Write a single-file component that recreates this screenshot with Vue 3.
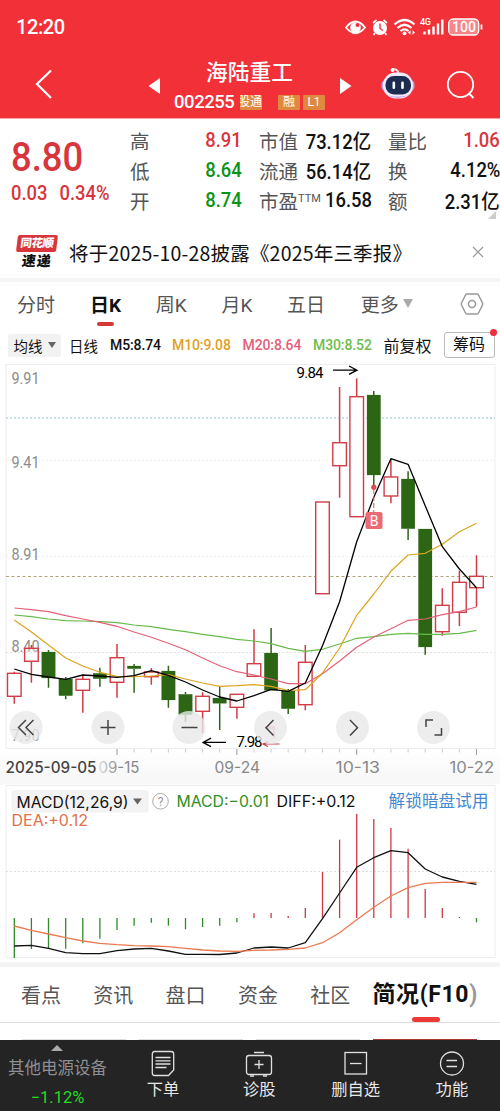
<script setup>
import { ref } from 'vue'

const quotes = ref([
  [
    { label: '高', value: '8.91', color: 'red' },
    { label: '市值', value: '73.12亿' },
    { label: '量比', value: '1.06', color: 'red' },
  ],
  [
    { label: '低', value: '8.64', color: 'green' },
    { label: '流通', value: '56.14亿' },
    { label: '换', value: '4.12%' },
  ],
  [
    { label: '开', value: '8.74', color: 'green' },
    { label: '市盈', sup: 'TTM', value: '16.58' },
    { label: '额', value: '2.31亿' },
  ],
])

const periods = ['分时', '日K', '周K', '月K', '五日']
const activePeriod = ref('日K')

const sections = ['看点', '资讯', '盘口', '资金', '社区']

// x of the n-th trading day
const px = (i) => +(14.3 + i * 17.12).toFixed(1)

// [high, body top, body bottom, low, up]
const candles = [
  [671.7, 673.3, 696.3, 703.7, 1],
  [645, 648.3, 661.3, 682.7, 1],
  [650, 652, 678, 687.7, 0],
  [677, 679, 695.7, 699.3, 0],
  [675.7, 679.3, 690.3, 712.7, 1],
  [667.7, 673.3, 678.7, 686.7, 0],
  [644, 657.7, 682.3, 697.7, 1],
  [664, 666, 668.7, 692.7, 0],
  [668, 672, 676.7, 684.7, 1],
  [665.7, 671, 700, 707.7, 0],
  [692, 694.3, 714.7, 722, 0],
  [692.3, 696.3, 711.3, 733, 1],
  [686.7, 698, 703.3, 730, 0],
  [694.3, 694.3, 707.3, 718.7, 1],
  [629.3, 663.7, 676.3, 676.3, 1],
  [628, 653, 690.3, 690.3, 0],
  [689, 691, 708.7, 714, 0],
  [645, 662.3, 704.7, 710.3, 1],
  [502, 502, 593.7, 593.7, 1],
  [387, 442.7, 465.7, 497.7, 1],
  [378.3, 396.7, 516.7, 516.7, 1],
  [391, 395, 475, 486.7, 0],
  [459, 477, 496, 503.3, 1],
  [471.3, 479, 528.7, 540, 0],
  [529, 529, 647, 654.7, 0],
  [588.3, 605.3, 631.7, 635.7, 1],
  [570.7, 582.3, 612.3, 626, 1],
  [555.3, 576.3, 587.7, 606.7, 1],
]

const ma5 = [669, 674.3, 677, 679.3, 675, 676, 677.3, 675.7, 670.7, 675.3, 682, 690, 697, 701, 695.7, 689.3, 691.3, 683, 645.7, 601.7, 541.7, 497.3, 458.7, 464.3, 505.7, 546.7, 569, 587.7]
const ma10 = [620, 632, 645, 658, 666, 672.3, 676.3, 676.7, 676, 674.7, 679, 683, 686.3, 685.7, 684.7, 686.3, 690.7, 689.7, 673, 648, 615.3, 594, 571.3, 555, 553.3, 544.3, 531.7, 523.3]
const ma20 = [608, 609.7, 611.7, 615.7, 619, 622.3, 626.3, 632, 637.3, 643.3, 649.7, 658, 665.7, 671.7, 675, 679, 683.7, 683.7, 673.7, 661, 647.3, 637, 628.7, 620.3, 619, 614.7, 611.7, 607]
const ma30 = [615, 616.7, 619, 620.7, 621, 621.7, 622.7, 625, 626.7, 629.3, 631.7, 634.3, 636.7, 639.3, 641, 643.7, 648.3, 651.3, 649.3, 644, 638.3, 636.7, 634.3, 633.3, 634.3, 634.3, 633.3, 630.3]

const bars = [958, 949, 948.3, 948.7, 943.3, 938.7, 930, 925.7, 922.7, 925.7, 929.3, 927, 925.7, 922.3, 913.3, 913, 916, 908, 872, 839.7, 814, 819, 828, 848.7, 889, 908, 917, 922.3]
const diff = [946, 945.3, 948.3, 952.7, 953.7, 953.7, 950.7, 949, 948.3, 951, 954.3, 954.3, 954.5, 953, 948, 947, 948, 942.7, 918.7, 893, 867.3, 857.7, 850.7, 852.7, 869, 877, 881.3, 884.3]
const dea = [926, 930.3, 934, 937.7, 941, 943.3, 944.7, 945.7, 946, 946.7, 948.3, 950, 951, 951.3, 950.3, 950, 949.3, 948, 942.7, 932.7, 919.7, 907.3, 896, 887.7, 883.3, 882.3, 882.3, 882.3]

const line = (arr) => arr.map((y, i) => `${px(i)},${y}`).join(' ')

const priceLabels = [
  { text: '9.91', y: 384 },
  { text: '9.41', y: 468 },
  { text: '8.91', y: 560 },
  { text: '8.40', y: 652 },
  { text: '7.90', y: 741 },
]
const ticks = Array.from({ length: 22 }, (_, i) => i + 6)
const buttonX = [26, 108, 189, 270.5, 352.5, 433.5]
</script>

<template>
  <div class="page">
    <header class="header">
      <div class="status">
        <span class="time">12:20</span>
        <svg class="status-icons" width="142" height="24" viewBox="0 0 142 24">
          <!-- eye -->
          <path d="M1 12.5 Q10.500 0.500 20 12.500 Q10.500 24 1 12.500Z" fill="none" stroke="#fff" stroke-width="1.8" />
          <circle cx="10.500" cy="12.500" r="5.300" fill="#fff" />
          <circle cx="12.500" cy="10" r="2" fill="#f23038" />
          <!-- alarm -->
          <circle cx="35" cy="13" r="7" fill="#fff" />
          <path d="M28 8 L31.500 5 M42 8 L38.500 5 M30 18 L28.500 20 M40 18 L41.500 20" stroke="#fff" stroke-width="1.700" />
          <path d="M35 8.500 V13.500 L38 15.500" fill="none" stroke="#f23038" stroke-width="1.400" />
          <!-- wifi -->
          <g fill="none" stroke="#fff" stroke-width="2.200">
            <path d="M49.500 9.500 Q59.500 0.500 69.500 9.500" />
            <path d="M52.500 13 Q59.500 6.500 66.500 13" />
            <path d="M55.500 16.200 Q59.500 12.700 63.500 16.200" />
          </g>
          <circle cx="59.500" cy="18.300" r="1.900" fill="#fff" />
          <path d="M65.500 15.200 L63 17.500 L65.500 19.800Z M67.500 15.200 L70 17.500 L67.500 19.800Z" fill="#fff" />
          <!-- signal -->
          <text x="75" y="10" class="net" textLength="11">4G</text>
          <path d="M79.500 19.500 V16.500 M84 19.500 V14.500 M88.500 19.500 V11.500 M93 19.500 V8.500 M97.300 19.500 V4.500" stroke="#fff" stroke-width="2.400" />
          <!-- battery -->
          <rect x="103.700" y="4" width="30" height="16" rx="4.500" fill="#f7868b" stroke="#fff" stroke-width="1.300" />
          <path d="M136.500 9.500 V14.500" stroke="#fff" stroke-width="1.800" />
          <text x="107" y="17.200" class="battery" textLength="24">100</text>
        </svg>
      </div>
      <div class="title-row">
        <svg class="back" width="20" height="32" viewBox="0 0 20 32"><path d="M17 2.500 L3 16 L17 30" fill="none" stroke="#fff" stroke-width="2.200" /></svg>
        <svg class="prev" width="12" height="18" viewBox="0 0 12 18"><path d="M0.500 9 L12 1 V17Z" fill="#fff" /></svg>
        <div class="stock">
          <div class="name">海陆重工</div>
          <div class="code-row">
            <span class="code">002255</span>
            <span class="tag clipped"><i>股通</i></span>
            <span class="tag margin">融</span>
            <span class="tag">L1</span>
          </div>
        </div>
        <svg class="next" width="12" height="18" viewBox="0 0 12 18"><path d="M11.500 9 L0 1 V17Z" fill="#fff" /></svg>
        <svg class="robot" width="36" height="34" viewBox="0 0 36 34">
          <path d="M12 2.500 Q17 1 18.500 6" fill="none" stroke="#ffdfe8" stroke-width="2" />
          <circle cx="12.500" cy="3" r="1.900" fill="#fff" />
          <rect x="1.500" y="12.500" width="33" height="12" rx="5" fill="#b5a5f2" />
          <rect x="3" y="5.500" width="30" height="26" rx="12.500" fill="#f2eafe" />
          <path d="M7 28 Q18 34 29 28 Q18 31 7 28" fill="#c7b0f2" />
          <rect x="5.500" y="9" width="25.500" height="18.500" rx="8.500" fill="#1c2b50" />
          <path d="M13.800 15.800 V20.800 M22.500 15.800 V20.800" stroke="#fff" stroke-width="2.600" stroke-linecap="round" />
        </svg>
        <svg class="search" width="30" height="30" viewBox="0 0 30 30">
          <circle cx="14.500" cy="14.500" r="12.700" fill="none" stroke="#fff" stroke-width="1.800" />
          <path d="M22.500 23 L27.500 28" stroke="#fff" stroke-width="1.900" />
        </svg>
      </div>
    </header>

    <section class="quote">
      <div class="price">
        <div class="last">8.80</div>
        <div class="change"><span>0.03</span><span>0.34%</span></div>
      </div>
      <div class="quote-grid">
        <div v-for="(row, r) in quotes" :key="r" class="quote-row">
          <div v-for="cell in row" :key="cell.label" class="cell">
            <span class="label">{{ cell.label }}<sup v-if="cell.sup">{{ cell.sup }}</sup></span>
            <span class="value" :class="cell.color">{{ cell.value }}</span>
          </div>
        </div>
      </div>
      <i class="corner"></i>
    </section>

    <section class="news">
      <div class="logo">
        <div class="logo-top">同花顺</div>
        <div class="logo-bottom">速递</div>
      </div>
      <span class="news-text">将于2025-10-28披露《2025年三季报》</span>
      <svg width="12" height="12" viewBox="0 0 12 12"><path d="M1 1 L11 11 M11 1 L1 11" stroke="#999" stroke-width="1.200" /></svg>
    </section>

    <nav class="periods">
      <span
        v-for="item in periods"
        :key="item"
        class="period"
        :class="{ active: activePeriod === item }"
        @click="activePeriod = item"
      >{{ item }}</span>
      <span class="more">更多<i></i></span>
      <svg class="gear" width="24" height="24" viewBox="0 0 24 24" fill="none" stroke="#999" stroke-width="1.500">
        <path d="M7 2 H17 Q18 2 18.500 3 L22.500 11 Q23 12 22.500 13 L18.500 21 Q18 22 17 22 H7 Q6 22 5.500 21 L1.500 13 Q1 12 1.500 11 L5.500 3 Q6 2 7 2Z" />
        <circle cx="12" cy="12" r="3.500" />
      </svg>
    </nav>

    <div class="averages">
      <span class="select">均线<i></i></span>
      <span class="day">日线</span>
      <span class="ma m5">M5:8.74</span>
      <span class="ma m10">M10:9.08</span>
      <span class="ma m20">M20:8.64</span>
      <span class="ma m30">M30:8.52</span>
      <span class="adjust">前复权</span>
      <span class="chips">筹码</span>
    </div>

    <svg class="chart" width="500" height="600" viewBox="0 362 500 600">
      <defs>
        <linearGradient id="axisBg" x1="0" y1="0" x2="0" y2="1">
          <stop offset="0" stop-color="#fff" />
          <stop offset="1" stop-color="#f6f6f6" />
        </linearGradient>
        <linearGradient id="fade" x1="0" y1="0" x2="1" y2="0">
          <stop offset="0" stop-color="#ddd" />
          <stop offset="0.500" stop-color="#888" />
        </linearGradient>
      </defs>
      <rect x="0" y="749" width="500" height="34" fill="url(#axisBg)" />
      <rect x="6" y="364.500" width="489" height="384" fill="#fff" stroke="#ededed" />
      <g stroke="#e2e2e2" stroke-dasharray="2 2">
        <path d="M6 460.500 H495" stroke="#f0f0f0" />
        <path d="M6 556.500 H495" stroke="#f0f0f0" />
        <path d="M6 652.500 H495" />
      </g>
      <path d="M6 418 H495" stroke="#8fc3ce" stroke-dasharray="2 2" />
      <path d="M6 576.500 H495" stroke="#b3a17a" stroke-dasharray="3 2.500" />

      <text v-for="p in priceLabels" :key="p.text" x="11.500" :y="p.y" class="axis" textLength="28" lengthAdjust="spacingAndGlyphs">{{ p.text }}</text>

      <g v-for="(c, i) in candles" :key="i" :stroke="c[4] ? '#d23c46' : '#2c6614'" stroke-width="1.500">
        <path :d="`M${px(i)} ${c[0]} V${c[1]} M${px(i)} ${c[2]} V${c[3]}`" />
        <rect :x="px(i) - 6.800" :y="c[1]" width="13.600" :height="c[2] - c[1]" :fill="c[4] ? '#fff' : '#2c6614'" :fill-opacity="i === 1 ? 0.300 : 1" :stroke-width="c[4] ? 1.400 : 0.200" />
      </g>

      <g fill="none" stroke-width="1.200" stroke-linejoin="round">
        <polyline :points="line(ma30)" stroke="#66bb4a" />
        <polyline :points="line(ma20)" stroke="#e4607a" />
        <polyline :points="line(ma10)" stroke="#dca41e" />
        <polyline :points="line(ma5)" stroke="#000" stroke-width="1.300" />
      </g>

      <!-- buy mark -->
      <path d="M373.800 489 V512" stroke="#df5560" stroke-dasharray="5 2" />
      <circle cx="373.800" cy="487.200" r="2.600" fill="#df4b55" />
      <rect x="365.500" y="512" width="17" height="17" rx="2" fill="#eb6b74" />
      <text x="374" y="525.500" class="buy" text-anchor="middle">B</text>

      <!-- high and low -->
      <text x="296.500" y="378.300" class="extreme" textLength="27">9.84</text>
      <path d="M333 370.200 H357 M349 366 L357 370.200 L349 374.400" fill="none" stroke="#000" stroke-width="1.300" />
      <path d="M226 742.400 H203 M211 738.200 L203 742.400 L211 746.600" fill="none" stroke="#000" stroke-width="1.300" />
      <text x="236.500" y="747" class="extreme" textLength="26">7.98</text>
      <path d="M279.500 744 H263 M268 741.500 L263 744 L268 746.500" fill="none" stroke="#c9424b" stroke-width="1.200" />
      <rect x="265" y="726" width="10" height="3" fill="#eb9ba0" />
      <path d="M274 726 V738" stroke="#eb9ba0" stroke-width="2" />

      <!-- tool buttons -->
      <circle v-for="x in buttonX" :key="x" :cx="x" cy="727.500" r="16.500" fill="#e9e9e9" opacity="0.800" />
      <g fill="none" stroke="#444" stroke-width="1.500">
        <path d="M26 720 L18.500 727.500 L26 735 M33.500 720 L26 727.500 L33.500 735" />
        <path d="M100.500 727.500 H115.500 M108 720 V735" />
        <path d="M181.500 727.500 H197.500" />
        <path d="M273.500 720 L266 727.700 L273.500 735.500" />
        <path d="M350 720 L357.500 727.700 L350 735.500" />
        <path d="M426 727 V720 H433 M434.500 735 H441.500 V728" />
      </g>

      <path v-for="t in ticks" :key="t" :d="`M${px(t)} 749 V${(t - 6) % 7 ? 752.500 : 755}`" :stroke="(t - 6) % 7 ? '#ccc' : '#999'" />
      <text x="98.500" y="773" class="date" fill="url(#fade)" textLength="41" lengthAdjust="spacingAndGlyphs">09-15</text>
      <rect x="92" y="758" width="6" height="18" fill="#fafafa" />
      <text x="5.500" y="773" class="date first" textLength="91" lengthAdjust="spacingAndGlyphs">2025-09-05</text>
      <text x="214.500" y="773" class="date" textLength="45.500" lengthAdjust="spacingAndGlyphs">09-24</text>
      <text x="335.500" y="773" class="date" textLength="44.500" lengthAdjust="spacingAndGlyphs">10-13</text>
      <text x="449.500" y="773" class="date" textLength="44.500" lengthAdjust="spacingAndGlyphs">10-22</text>

      <!-- MACD -->
      <rect x="0" y="781" width="500" height="3.500" fill="#f8f8f8" />
      <rect x="6" y="785.500" width="489" height="172" fill="#fff" stroke="#ededed" />
      <path d="M6 871.500 H495" stroke="#dedede" stroke-dasharray="2 2" />
      <rect x="11.500" y="790" width="137" height="22.500" rx="2" fill="#f3f3f3" />
      <text x="16.500" y="807.500" class="indicator" fill="#111" textLength="112" lengthAdjust="spacingAndGlyphs">MACD(12,26,9)</text>
      <path d="M133 798.500 H142 L137.500 804.500Z" fill="#666" />
      <circle cx="160.500" cy="801.300" r="7.800" fill="none" stroke="#aaa" />
      <text x="160.500" y="806" class="help" text-anchor="middle">?</text>
      <text x="176.500" y="807" class="indicator" fill="#2e8f26" textLength="92.500" lengthAdjust="spacingAndGlyphs">MACD:−0.01</text>
      <text x="276.500" y="807" class="indicator" fill="#111" textLength="79" lengthAdjust="spacingAndGlyphs">DIFF:+0.12</text>
      <text x="11.500" y="826" class="indicator" fill="#e4714b" textLength="76.500" lengthAdjust="spacingAndGlyphs">DEA:+0.12</text>
      <text x="388.500" y="807" class="unlock" textLength="100">解锁暗盘试用</text>
      <path v-for="(b, i) in bars" :key="'b' + i" :d="`M${px(i)} 918 V${b}`" :stroke="b > 918 ? '#2f8a2a' : '#cf3a42'" stroke-width="1.300" />
      <g fill="none" stroke-width="1.300" stroke-linejoin="round">
        <polyline :points="line(diff)" stroke="#111" />
        <polyline :points="line(dea)" stroke="#ec7a50" />
      </g>
    </svg>

    <nav class="sections">
      <span v-for="s in sections" :key="s" class="section">{{ s }}</span>
      <span class="section current">简况(F10<em>)</em></span>
    </nav>
    <div class="cards"><i></i><i></i><i></i><i class="on"></i></div>

    <footer class="toolbar">
      <div class="sector">
        <i class="up"></i>
        <span class="sector-name">其他电源设备</span>
        <span class="sector-rate">−1.12%</span>
      </div>
      <div class="tool">
        <svg width="28" height="28" viewBox="0 0 28 28">
          <path d="M5.500 1.500 H22 Q24.700 1.500 24.700 4 V20 L19.500 25.500 H5.500 Q3.300 25.500 3.300 23 V4 Q3.300 1.500 5.500 1.500Z" />
          <path d="M6.500 7.500 H21.500 M6.500 10.800 H21.500 M6.500 14 H21.500 M6.500 17.500 H17.500" />
        </svg>
        <span>下单</span>
      </div>
      <div class="tool">
        <svg width="28" height="28" viewBox="0 0 28 28">
          <rect x="1.500" y="5.500" width="25" height="19" rx="2.500" />
          <path d="M9 2.500 H19 M14 10 V19 M9.500 14.500 H18.500 M5 26 H9 M18 26 H22" />
        </svg>
        <span>诊股</span>
      </div>
      <div class="tool">
        <svg width="28" height="28" viewBox="0 0 28 28">
          <rect x="3" y="2.500" width="21.500" height="21.500" />
          <path d="M8 13.500 H19.500" />
        </svg>
        <span>删自选</span>
      </div>
      <div class="tool">
        <svg width="28" height="28" viewBox="0 0 28 28">
          <circle cx="14" cy="13.500" r="11.500" />
          <path d="M8.500 10.500 H19 M8.500 16.500 H19" />
        </svg>
        <span>功能</span>
      </div>
    </footer>
  </div>
</template>

<style>
body {
  margin: 0;
  background: #fff;
}
</style>

<style scoped>
.page {
  width: 500px;
  height: 1111px;
  overflow: hidden;
  display: flex;
  flex-direction: column;
  background: #fff;
  font-family: Roboto, "Noto Sans CJK SC", sans-serif;
  color: #111;
}

.page > * {
  flex-shrink: 0;
}

i {
  font-style: normal;
}

.header {
  height: 118px;
  background: #f23038;
  border-bottom: 1px solid #f5a3a6;
  color: #fff;
}

.status {
  display: flex;
  justify-content: space-between;
  align-items: center;
  height: 54px;
  padding: 0 13px 0 16px;
}

.time {
  font-size: 20px;
  font-weight: 500;
  letter-spacing: -0.4px;
}

.net {
  font-size: 9px;
  font-weight: 500;
  fill: #fff;
}

.battery {
  font-size: 14px;
  font-weight: 500;
  fill: #fff;
}

.title-row {
  display: flex;
  height: 64px;
  align-items: center;
}

.back {
  margin-left: 34px;
  margin-top: -4px;
}

.prev {
  margin-left: 94px;
}

.stock {
  width: 180px;
  height: 64px;
}

.name {
  padding-right: 1px;
  margin-top: 4px;
  text-align: center;
  font-size: 21.7px;
  font-weight: 500;
  line-height: 30px;
}

.code-row {
  display: flex;
  align-items: center;
  height: 24px;
  margin-top: 2px;
  padding-left: 14px;
}

.code {
  width: 66px;
  font-size: 18.5px;
  font-weight: 500;
  letter-spacing: -0.45px;
}

.tag {
  box-sizing: border-box;
  width: 22px;
  height: 15px;
  border-radius: 1px;
  background: #df8840;
  font-size: 12px;
  line-height: 14px;
  text-align: center;
  margin-right: 3px;
}

.clipped {
  display: flex;
  justify-content: flex-end;
  overflow: hidden;
  white-space: nowrap;
}

.tag.margin {
  margin-left: 13px;
}

.robot {
  margin-left: 28px;
  margin-top: -4px;
}

.search {
  margin-left: 30px;
  margin-top: -2px;
}

.quote {
  position: relative;
  display: flex;
  height: 107px;
}

.price {
  width: 130px;
  padding-left: 11px;
  box-sizing: border-box;
  color: #d8353c;
}

.last {
  margin-top: 16px;
  font-size: 40px;
  font-weight: 500;
  line-height: 46px;
  transform: scaleX(0.91);
  transform-origin: left;
}

.change {
  display: flex;
  gap: 13px;
  font-size: 20px;
  font-weight: 500;
  line-height: 24px;
  transform: scaleX(0.92);
  transform-origin: left;
}

.quote-grid {
  width: 370px;
  padding-top: 6px;
}

.quote-row {
  display: flex;
  gap: 17px;
  height: 30px;
}

.cell {
  display: flex;
  justify-content: space-between;
  align-items: center;
  width: 112px;
  white-space: nowrap;
}

.label {
  font-size: 19.5px;
  color: #555;
}

.label sup {
  font-size: 11px;
  line-height: 0;
}

.value {
  font-size: 20px;
  font-weight: 500;
  transform: scaleX(0.92);
  transform-origin: right;
}

.red {
  color: #d8353c;
}

.green {
  color: #0a9414;
}

.corner {
  position: absolute;
  right: 4px;
  bottom: 7px;
  border-bottom: 8px solid #ccc;
  border-left: 8px solid transparent;
}

.news {
  display: flex;
  align-items: center;
  height: 52px;
  padding-right: 16px;
  border-bottom: 4px solid #f5f5f5;
}

.logo {
  width: 40px;
  margin-left: 17px;
  margin-right: 12px;
  font-weight: 900;
  text-align: center;
}

.logo-top {
  background: #d8353c;
  color: #fff;
  height: 17px;
  border-radius: 2px;
  font-size: 11.5px;
  line-height: 16px;
  letter-spacing: -0.5px;
  transform: skewX(-7deg);
}

.logo-bottom {
  height: 17px;
  font-size: 14px;
  line-height: 18px;
  letter-spacing: 1px;
  transform: skewX(-7deg);
}

.news-text {
  flex: 1;
  font-size: 19.5px;
  font-family: "Noto Sans CJK SC", sans-serif;
  letter-spacing: 0.2px;
  white-space: nowrap;
}

.periods {
  display: flex;
  align-items: center;
  box-sizing: border-box;
  height: 46px;
  padding-left: 17px;
  padding-bottom: 3px;
  font-size: 19px;
  color: #555;
}

.period {
  position: relative;
  width: 65.7px;
}

.period:first-child {
  width: 73px;
}

.active {
  color: #111;
  font-weight: 700;
}

.active::after {
  content: '';
  position: absolute;
  left: 7px;
  bottom: -9px;
  width: 17px;
  height: 4px;
  border-radius: 2px;
  background: #d13a37;
}

.more {
  display: flex;
  align-items: center;
  gap: 4px;
  margin-left: 8px;
}

.more i {
  border: 5px solid transparent;
  border-top: 9px solid #aaa;
  border-bottom: 0;
}

.gear {
  margin-left: 47px;
}

.averages {
  display: flex;
  align-items: center;
  height: 34px;
  padding-left: 8px;
  font-size: 14.5px;
}

.select {
  display: flex;
  align-items: center;
  justify-content: center;
  gap: 5px;
  width: 53px;
  height: 23px;
  border-radius: 2px;
  background: #f2f2f2;
}

.select i {
  border: 4px solid transparent;
  border-top: 6px solid #666;
  border-bottom: 0;
}

.day {
  margin-left: 8px;
  width: 41px;
}

.ma {
  font-size: 14px;
  font-weight: 500;
  letter-spacing: -0.1px;
  white-space: nowrap;
}

.m5 {
  width: 62px;
}

.m10 {
  width: 70.5px;
  color: #dfa126;
}

.m20 {
  width: 70.5px;
  color: #e4607a;
}

.m30 {
  width: 70.5px;
  color: #6fbd4f;
}

.adjust {
  width: 60px;
  font-size: 16px;
}

.chips {
  position: relative;
  box-sizing: border-box;
  width: 51px;
  height: 26px;
  border: 1px solid #bbb;
  border-radius: 3px;
  text-align: center;
  font-size: 16px;
  line-height: 24px;
}

.chips::after {
  content: '';
  position: absolute;
  right: -3px;
  top: -4px;
  width: 7px;
  height: 7px;
  border-radius: 50%;
  background: #f02f3f;
}

.chart {
  display: block;
}

.axis {
  font-size: 16px;
  fill: #8c8c8c;
}

.extreme {
  font-size: 15px;
  fill: #000;
}

.buy {
  font-size: 14px;
  fill: #fff;
}

.date {
  font-family: Inter, sans-serif;
  font-size: 15.5px;
}

.date:not([fill]) {
  fill: #888;
}

.date.first {
  fill: #444;
  font-weight: 500;
}

.indicator {
  font-family: Inter, sans-serif;
  font-size: 15.3px;
}

.help {
  font-size: 12px;
  fill: #999;
}

.unlock {
  font-size: 16.5px;
  fill: #4388d0;
}

.sections {
  display: flex;
  align-items: center;
  box-sizing: border-box;
  height: 61px;
  padding-left: 21px;
  border-top: 5px solid #f4f4f4;
  border-bottom: 1px solid #ddd;
  font-size: 20px;
  color: #555;
}

.section {
  width: 72.3px;
  white-space: nowrap;
}

.current {
  position: relative;
  margin-left: -10px;
  margin-top: -5px;
  color: #111;
  font-size: 23px;
  font-weight: 700;
  letter-spacing: 0.6px;
}

.current em {
  font-style: normal;
  color: #999;
}

.current::after {
  content: '';
  position: absolute;
  left: 40px;
  bottom: -13px;
  width: 28px;
  height: 5px;
  border-radius: 3px;
  background: #ee3a36;
}

.cards {
  display: flex;
  align-items: flex-end;
  gap: 13px;
  height: 17px;
  padding-left: 22px;
}

.cards i {
  width: 104px;
  height: 1px;
  background: #ddd;
}

.cards .on {
  background: #a8382f;
}

.toolbar {
  display: flex;
  height: 71px;
  background: #242424;
  color: #e8e8e8;
}

.sector {
  display: flex;
  flex-direction: column;
  align-items: center;
  width: 115px;
}

.up {
  margin-top: 5px;
  border: 6px solid transparent;
  border-bottom: 6px solid #aaa;
  border-top: 0;
}

.sector-name {
  margin-top: 6px;
  font-size: 16.5px;
  line-height: 24px;
  color: #8d8f94;
}

.sector-rate {
  margin-top: 6px;
  font-size: 16.5px;
  line-height: 22px;
  color: #22dd22;
}

.tool {
  display: flex;
  flex-direction: column;
  align-items: center;
  width: 96.3px;
  padding-top: 10px;
  font-size: 16.3px;
  line-height: 24px;
}

.tool svg {
  fill: none;
  stroke: #e0e0e0;
  stroke-width: 1.3;
}
</style>
